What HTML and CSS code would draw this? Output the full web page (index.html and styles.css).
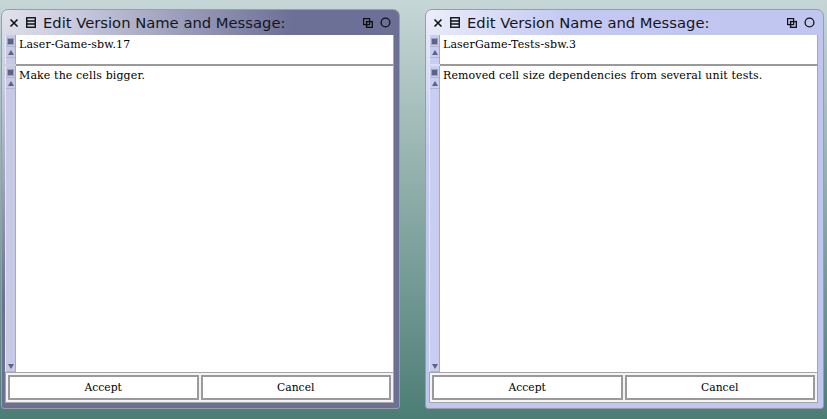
FILE: index.html
```html
<!DOCTYPE html>
<html>
<head>
<meta charset="utf-8">
<link rel="stylesheet" href="styles.css">
</head>
<body>
<div class="desk">
  <div class="win win-inactive">
    <div class="title">
      <svg class="ic-close" width="10" height="10" viewBox="0 0 10 10"><path d="M1.5 1.5 L8.5 8.5 M8.5 1.5 L1.5 8.5" stroke="#111" stroke-width="1.6" fill="none"/></svg>
      <svg class="ic-menu" width="10" height="11" viewBox="0 0 10 11"><rect x="0.75" y="0.75" width="8.5" height="9.5" fill="none" stroke="#111" stroke-width="1.4"/><path d="M1 4 H9 M1 7 H9" stroke="#111" stroke-width="1.4"/></svg>
      <span class="title-text">Edit Version Name and Message:</span>
      <span class="title-right">
        <svg width="10" height="10" viewBox="0 0 10 10"><rect x="0.6" y="0.6" width="6" height="6" fill="none" stroke="#111" stroke-width="1.2"/><rect x="3.6" y="3.6" width="5.8" height="5.8" fill="none" stroke="#111" stroke-width="1.4"/></svg>
        <svg width="11" height="11" viewBox="0 0 11 11"><circle cx="5.5" cy="5.5" r="4.4" fill="none" stroke="#111" stroke-width="1.3"/></svg>
      </span>
    </div>
    <div class="pane pane-name">
      <div class="sbar">
        <span class="sb-btn"><span class="sq"></span></span>
        <span class="sb-btn"><span class="up"></span></span>
      </div>
      <div class="text">Laser-Game-sbw.17</div>
    </div>
    <div class="sep"></div>
    <div class="pane pane-msg">
      <div class="sbar">
        <span class="sb-btn"><span class="sq"></span></span>
        <span class="sb-btn"><span class="up"></span></span>
        <span class="sb-fill"></span>
        <span class="sb-btn"><span class="down"></span></span>
      </div>
      <div class="text">Make the cells bigger.</div>
    </div>
    <div class="buttons">
      <div class="btn">Accept</div>
      <div class="btn">Cancel</div>
    </div>
  </div>

  <div class="win win-active">
    <div class="title">
      <svg class="ic-close" width="10" height="10" viewBox="0 0 10 10"><path d="M1.5 1.5 L8.5 8.5 M8.5 1.5 L1.5 8.5" stroke="#111" stroke-width="1.6" fill="none"/></svg>
      <svg class="ic-menu" width="10" height="11" viewBox="0 0 10 11"><rect x="0.75" y="0.75" width="8.5" height="9.5" fill="none" stroke="#111" stroke-width="1.4"/><path d="M1 4 H9 M1 7 H9" stroke="#111" stroke-width="1.4"/></svg>
      <span class="title-text">Edit Version Name and Message:</span>
      <span class="title-right">
        <svg width="10" height="10" viewBox="0 0 10 10"><rect x="0.6" y="0.6" width="6" height="6" fill="none" stroke="#111" stroke-width="1.2"/><rect x="3.6" y="3.6" width="5.8" height="5.8" fill="none" stroke="#111" stroke-width="1.4"/></svg>
        <svg width="11" height="11" viewBox="0 0 11 11"><circle cx="5.5" cy="5.5" r="4.4" fill="none" stroke="#111" stroke-width="1.3"/></svg>
      </span>
    </div>
    <div class="pane pane-name">
      <div class="sbar">
        <span class="sb-btn"><span class="sq"></span></span>
        <span class="sb-btn"><span class="up"></span></span>
      </div>
      <div class="text">LaserGame-Tests-sbw.3</div>
    </div>
    <div class="sep"></div>
    <div class="pane pane-msg">
      <div class="sbar">
        <span class="sb-btn"><span class="sq"></span></span>
        <span class="sb-btn"><span class="up"></span></span>
        <span class="sb-fill"></span>
        <span class="sb-btn"><span class="down"></span></span>
      </div>
      <div class="text">Removed cell size dependencies from several unit tests.</div>
    </div>
    <div class="buttons">
      <div class="btn">Accept</div>
      <div class="btn">Cancel</div>
    </div>
  </div>
</div>
</body>
</html>
```

FILE: styles.css
```css
html, body {
  margin: 0;
  padding: 0;
}
body {
  width: 827px;
  height: 419px;
  overflow: hidden;
  background: linear-gradient(to bottom, #c6d6d6 0%, #4c7d74 100%);
}
.desk {
  display: flex;
  gap: 25px;
  padding: 9px 0 0 1px;
}
.win {
  box-sizing: border-box;
  width: 399px;
  height: 400px;
  border: 1px solid #9c9ca8;
  border-radius: 7px 7px 3px 3px;
  padding: 0 5px 5px 3px;
  display: flex;
  flex-direction: column;
}
.win-inactive {
  background: radial-gradient(circle at 0 0, #e2e2ec 0, #c9cbde 70px, #6c7096 290px);
  --sb: #c6cae4;
  --sbdark: #5e6286;
}
.win-active {
  background: radial-gradient(circle at 0 0, #eceefa 0, #c3c9f3 140px, #c0c6f0 300px);
  --sb: #c8cdf2;
  --sbdark: #5e6286;
}
.title {
  height: 25px;
  flex: none;
  display: flex;
  align-items: center;
  font-family: "DejaVu Sans", sans-serif;
  font-size: 14.75px;
  color: #151522;
}
.ic-close {
  margin-left: 4px;
}
.ic-menu {
  margin-left: 7px;
}
.title-text {
  margin-left: 7px;
  white-space: nowrap;
}
.title-right {
  margin-left: auto;
  display: flex;
  align-items: center;
  gap: 7px;
  margin-right: 3px;
}
.pane {
  display: flex;
  flex: none;
}
.pane-name {
  height: 29px;
}
.pane-msg {
  height: 306px;
}
.sep {
  height: 2px;
  flex: none;
  background: #9a9a9a;
  margin-left: 11px;
}
.sbar {
  box-sizing: border-box;
  width: 11px;
  flex: none;
  background: var(--sb);
  border-left: 1px solid #e6e8f4;
  border-right: 1px solid #a4a8c4;
  display: flex;
  flex-direction: column;
  align-items: center;
  padding-top: 1px;
}
.sb-btn {
  width: 9px;
  height: 10px;
  display: flex;
  align-items: center;
  justify-content: center;
  border-bottom: 1px solid #b0b4d0;
}
.sb-fill {
  flex: 1;
}
.sq {
  width: 5px;
  height: 5px;
  background: var(--sbdark);
  box-shadow: 0 0 0 1px #9da1c0;
}
.up {
  width: 0;
  height: 0;
  border-left: 3px solid transparent;
  border-right: 3px solid transparent;
  border-bottom: 5px solid var(--sbdark);
}
.down {
  width: 0;
  height: 0;
  border-left: 3px solid transparent;
  border-right: 3px solid transparent;
  border-top: 5px solid var(--sbdark);
}
.text {
  flex: 1;
  background: #ffffff;
  border-right: 1px solid #a6a6b4;
  padding: 3px 0 0 3px;
  font-family: "DejaVu Serif", serif;
  font-size: 11px;
  letter-spacing: 0.12px;
  line-height: 14px;
  color: #000;
  white-space: nowrap;
}
.buttons {
  box-sizing: border-box;
  height: 31px;
  flex: none;
  display: flex;
  gap: 2px;
  padding: 2px;
  background: #f4f4f6;
  border: 1px solid #a6a6a6;
}
.btn {
  box-sizing: border-box;
  flex: 1;
  background: #fff;
  border: 2px solid #9a9a9a;
  display: flex;
  align-items: center;
  justify-content: center;
  font-family: "DejaVu Serif", serif;
  font-size: 10.75px;
  color: #000;
}
```
